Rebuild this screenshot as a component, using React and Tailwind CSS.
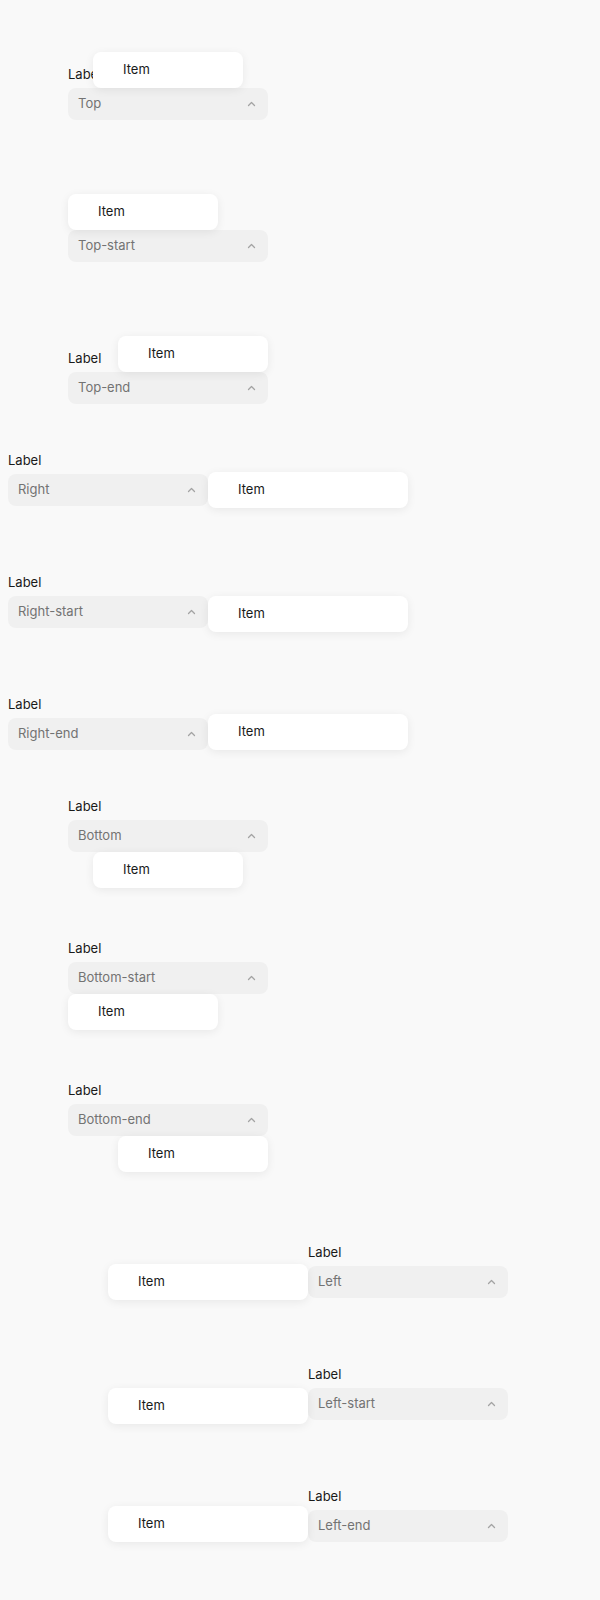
const stories = [
  { text: 'Top', pop: 'bottom-full left-1/2 -translate-x-1/2 w-[150px]', box: 'mt-[64px] ml-[68px]' },
  { text: 'Top-start', pop: 'bottom-full left-0 w-[150px]', box: 'mt-[86px] ml-[68px]' },
  { text: 'Top-end', pop: 'bottom-full right-0 w-[150px]', box: 'mt-[86px] ml-[68px]' },
  { text: 'Right', pop: 'left-full top-1/2 -translate-y-1/2 w-[200px]', box: 'mt-[46px] ml-[8px]' },
  { text: 'Right-start', pop: 'left-full top-0 w-[200px]', box: 'mt-[66px] ml-[8px]' },
  { text: 'Right-end', pop: 'left-full bottom-0 w-[200px]', box: 'mt-[66px] ml-[8px]' },
  { text: 'Bottom', pop: 'top-full left-1/2 -translate-x-1/2 w-[150px]', box: 'mt-[46px] ml-[68px]' },
  { text: 'Bottom-start', pop: 'top-full left-0 w-[150px]', box: 'mt-[86px] ml-[68px]' },
  { text: 'Bottom-end', pop: 'top-full right-0 w-[150px]', box: 'mt-[86px] ml-[68px]' },
  { text: 'Left', pop: 'right-full top-1/2 -translate-y-1/2 w-[200px]', box: 'mt-[106px] ml-[308px]' },
  { text: 'Left-start', pop: 'right-full top-0 w-[200px]', box: 'mt-[66px] ml-[308px]' },
  { text: 'Left-end', pop: 'right-full bottom-0 w-[200px]', box: 'mt-[66px] ml-[308px]' },
];

const Chevron = () => (
  <svg width="9" height="6" viewBox="0 0 9 6" fill="none" className="shrink-0">
    <path d="M1.5 4.5L4.5 1.5L7.5 4.5" stroke="#a3a3a3" strokeWidth="1.3" strokeLinecap="round" strokeLinejoin="round" />
  </svg>
);

const Story = ({ text, pop, box }) => (
  <div className={`w-[200px] ${box}`}>
    <p className="h-5 leading-5 text-[13px] text-[#1a1a1a] mb-1">Label</p>
    <div className="relative">
      <button className="w-full h-8 flex items-center justify-between pl-[10px] pr-[12px] bg-[#f0f0f0] rounded-lg text-[13px] text-[#737373]">
        <span>{text}</span>
        <Chevron />
      </button>
      {/* open listbox */}
      <div className={`absolute z-10 bg-white rounded-lg shadow-[0_2px_10px_rgba(0,0,0,0.07)] ${pop}`}>
        <div className="h-9 flex items-center pl-[30px] text-[13px] text-[#1a1a1a]">Item</div>
      </div>
    </div>
  </div>
);

const App = () => (
  <div className="min-h-[1600px] bg-[#f9f9f9] flex flex-col font-['Inter',sans-serif]">
    {stories.map((s) => (
      <Story key={s.text} {...s} />
    ))}
  </div>
);

export default App;
